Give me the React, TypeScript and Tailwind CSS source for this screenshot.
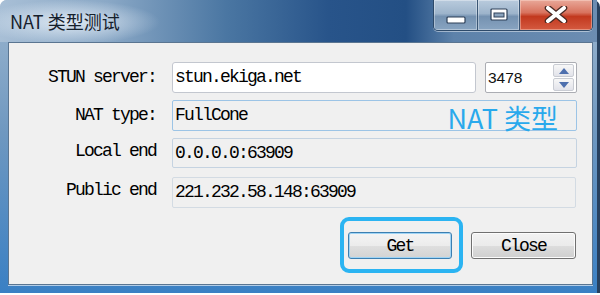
import React from "react";

const mono = "font-['Liberation_Mono','Noto_Sans_CJK_SC',monospace] text-[18px] tracking-[-1.8px] text-black";

function CaptionButtons() {
  return (
    <div className="flex h-[31px] mr-[4px] rounded-b-[5px] border border-t-0 border-[#2d4a6a] shadow-[0_1px_0_rgba(255,255,255,0.45)] overflow-hidden">
      {/* 最小化 */}
      <div className="w-[44px] h-full flex items-center justify-center border-r border-[#3a5675] bg-[linear-gradient(to_bottom,#b9cbdd_0%,#9db4cb_45%,#7592b1_55%,#88a4c1_100%)] shadow-[inset_0_0_0_1px_rgba(255,255,255,0.35)]">
        <svg width="20" height="8" viewBox="0 0 20 8" className="mt-[9px]">
          <rect x="1" y="1" width="18" height="6" rx="1" fill="#fff" stroke="#2e4058" strokeWidth="1.2" />
        </svg>
      </div>
      {/* 最大化 */}
      <div className="w-[42px] h-full flex items-center justify-center border-r border-[#3a5675] bg-[linear-gradient(to_bottom,#b9cbdd_0%,#9db4cb_45%,#7592b1_55%,#88a4c1_100%)] shadow-[inset_0_0_0_1px_rgba(255,255,255,0.35)]">
        <svg width="18" height="13" viewBox="0 0 18 13" className="-mt-[2px]">
          <rect x="1" y="1" width="16" height="11" rx="1" fill="#fff" stroke="#2e4058" strokeWidth="1.2" />
          <rect x="4" y="5" width="10" height="4" fill="#8aa3bd" stroke="#2e4058" strokeWidth="1" />
        </svg>
      </div>
      {/* 关闭 */}
      <div className="w-[72px] h-full flex items-center justify-center bg-[linear-gradient(to_bottom,#e9a899_0%,#d8735f_42%,#c2391f_55%,#d45a40_100%)] shadow-[inset_0_0_0_1px_rgba(255,230,220,0.4)]">
        <svg width="24" height="17" viewBox="0 0 24 17" className="-mt-[1px]">
          <path d="M4 2 L20 15 M20 2 L4 15" stroke="#4a2a24" strokeWidth="6.5" strokeLinecap="round" />
          <path d="M4 2 L20 15 M20 2 L4 15" stroke="#fff" strokeWidth="4" strokeLinecap="round" />
        </svg>
      </div>
    </div>
  );
}

function SpinBox() {
  return (
    <div className="w-[92px] h-[31px] flex bg-white border border-[#abadb3] rounded-[2px]">
      <div className="flex-1 flex items-center pl-[2px] font-['Liberation_Sans',sans-serif] text-[15.5px] text-[#111]">
        3478
      </div>
      <div className="w-[23px] flex flex-col gap-[1px] py-[1px] pr-[2px]">
        <div className="flex-1 flex items-center justify-center rounded-[2px] border border-[#c9ccd3] bg-[linear-gradient(to_bottom,#f7f7f7,#e2e3ea)]">
          <svg width="10" height="6" viewBox="0 0 10 6"><path d="M0 6 L5 0 L10 6 Z" fill="#4d6fae" /></svg>
        </div>
        <div className="flex-1 flex items-center justify-center rounded-[2px] border border-[#c9ccd3] bg-[linear-gradient(to_bottom,#f7f7f7,#e2e3ea)]">
          <svg width="10" height="6" viewBox="0 0 10 6"><path d="M0 0 L5 6 L10 0 Z" fill="#4d6fae" /></svg>
        </div>
      </div>
    </div>
  );
}

export default function App() {
  return (
    <div className="w-[600px] h-[295px] bg-white overflow-hidden">
      <div className="w-[600px] h-[293px] rounded-t-[7px] flex flex-col border-r-[3px] border-r-[#27405e] bg-[linear-gradient(to_bottom,#9cb6cf_0%,#6f98c0_45%,#3a80c4_100%)]">
        {/* 标题栏 */}
        <div className="h-[42px] flex justify-between items-start rounded-tl-[7px] bg-[radial-gradient(ellipse_90px_22px_at_70px_22px,rgba(225,235,245,0.95),rgba(225,235,245,0)_100%),linear-gradient(to_right,#a8bfd6_0%,#8aa8c6_18%,#4a76a2_38%,#28548a_55%,#234f84_68%,#5d82aa_76%,#6c8db2_100%)]">
          <div className="pl-[10px] pt-[9px] font-['Noto_Sans_CJK_SC','Noto_Sans',sans-serif] text-[18px] leading-[24px] text-[#15202c]">
            NAT 类型测试
          </div>
          <CaptionButtons />
        </div>

        {/* 客户区 */}
        <div className="flex-1 ml-[8px] mr-[4px] mb-[8px] bg-[#f0f0f0] border border-[#5a7591] shadow-[0_1px_0_rgba(255,255,255,0.6)] pt-[19px] flex flex-col">
          <div className="flex items-center h-[31px]">
            <div className={`w-[147px] text-right ${mono}`}>STUN server:</div>
            <div className="ml-[16px] flex gap-[9px]">
              <div className={`w-[304px] h-[31px] bg-white border border-[#c3c7cf] rounded-[3px] flex items-center pl-[2px] ${mono}`}>
                stun.ekiga.net
              </div>
              <SpinBox />
            </div>
          </div>

          <div className="flex items-center h-[31px] mt-[7px]">
            <div className={`w-[147px] text-right ${mono}`}>NAT type:</div>
            <div className={`relative ml-[16px] w-[405px] h-[31px] border border-[#9cc4e6] rounded-[2px] flex items-center pl-[2px] ${mono}`}>
              FullCone
              <span className="absolute right-[18px] top-[2px] font-['Noto_Sans_CJK_SC','Noto_Sans',sans-serif] text-[27px] leading-[30px] tracking-normal text-[#29a9ec]">
                NAT 类型
              </span>
            </div>
          </div>

          <div className="flex items-start h-[30px] mt-[7px]">
            <div className={`w-[147px] text-right ${mono}`}>Local end</div>
            <div className={`ml-[16px] w-[405px] h-[30px] border border-[#c5d3e1] rounded-[2px] flex items-center pl-[2px] ${mono}`}>
              0.0.0.0:63909
            </div>
          </div>

          <div className="flex items-start h-[31px] mt-[9px]">
            <div className={`w-[147px] text-right ${mono}`}>Public end</div>
            <div className={`ml-[16px] w-[404px] h-[31px] border border-[#d3dbe3] rounded-[2px] flex items-center pl-[2px] ${mono}`}>
              221.232.58.148:63909
            </div>
          </div>

          <div className="flex justify-end gap-[19px] pr-[16px] mt-[24px]">
            <div className="relative">
              <button className={`w-[104px] h-[27px] rounded-[3px] border border-[#3c7fb1] bg-[linear-gradient(to_bottom,#f4f4f4_0%,#ececec_50%,#dfdfdf_51%,#d3d3d3_100%)] shadow-[inset_0_0_0_1px_#9fd4f5] ${mono}`}>
                Get
              </button>
              <span className="absolute -left-[8px] -right-[11px] -top-[15px] -bottom-[14px] border-[4px] border-[#2bb4f2] rounded-[9px]" />
            </div>
            <button className={`w-[105px] h-[27px] rounded-[3px] border border-[#707070] bg-[linear-gradient(to_bottom,#f2f2f2_0%,#ebebeb_50%,#dddddd_51%,#cfcfcf_100%)] shadow-[inset_0_0_0_1px_#fcfcfc] ${mono}`}>
              Close
            </button>
          </div>
        </div>
      </div>
    </div>
  );
}
